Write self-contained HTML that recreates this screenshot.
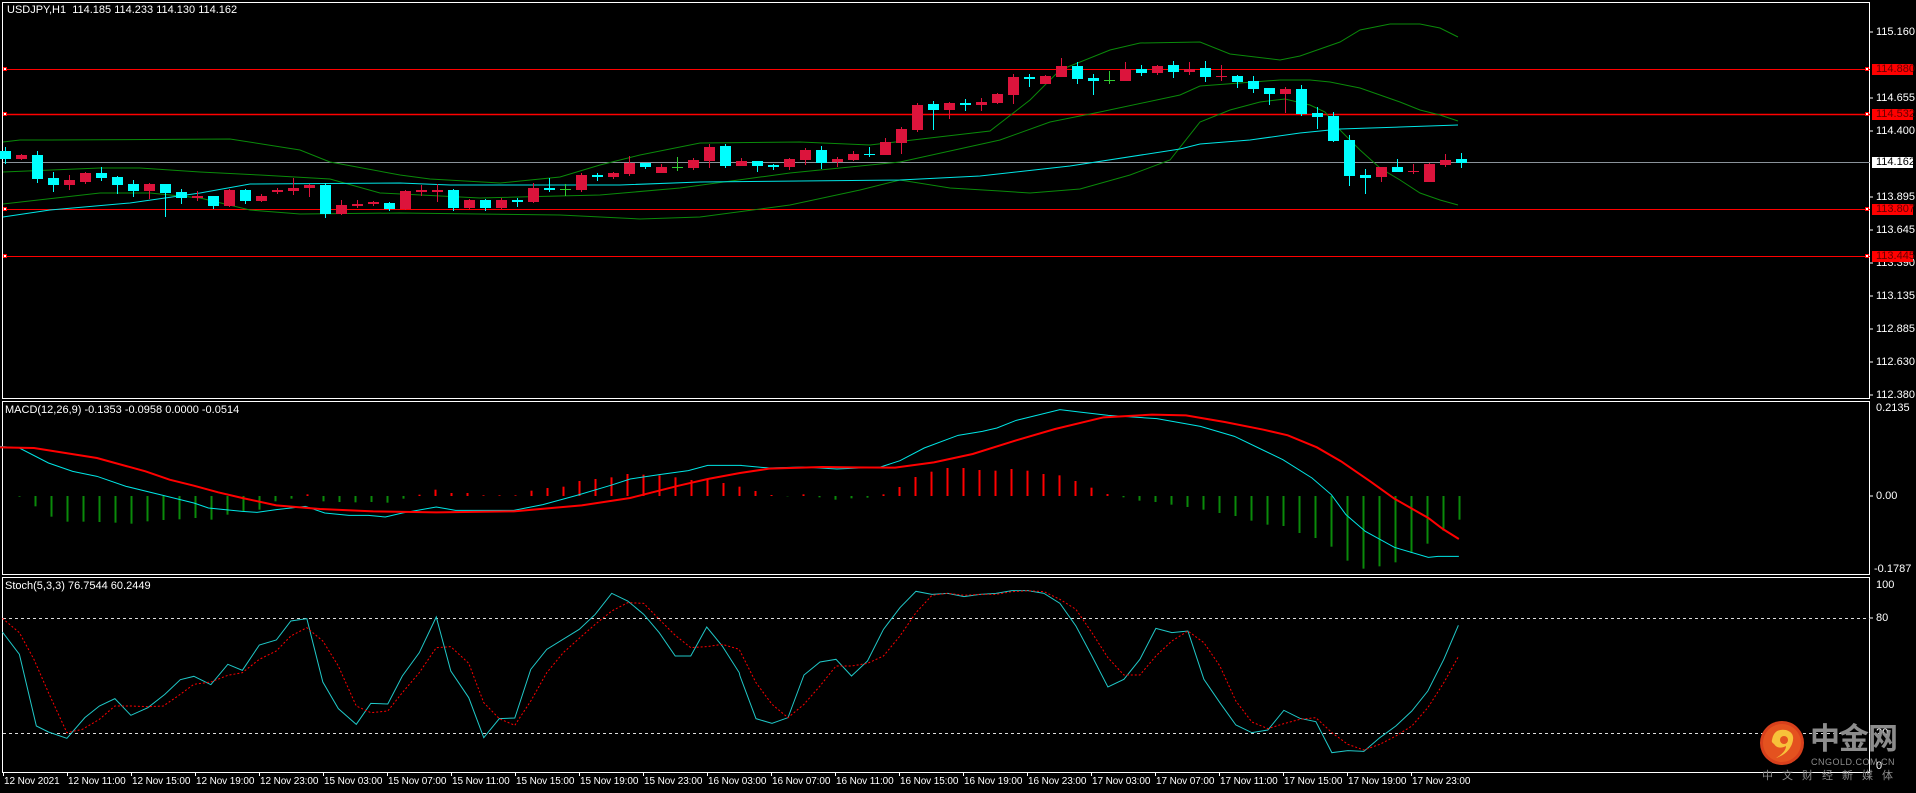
<!DOCTYPE html>
<html><head><meta charset="utf-8">
<style>
html,body{margin:0;padding:0;background:#000;width:1916px;height:793px;overflow:hidden;font-family:"Liberation Sans",Tahoma,sans-serif;}
.t{position:absolute;color:#fff;font-size:11px;line-height:12px;white-space:nowrap;}
.ax{position:absolute;left:1876px;color:#fff;font-size:11px;line-height:12px;}
.box{position:absolute;left:1872px;width:41px;height:11px;background:#f00;color:#600;font-size:11px;line-height:11px;padding-left:4px;box-sizing:border-box;}
.tl{position:absolute;top:776px;color:#fff;font-size:10px;line-height:12px;white-space:nowrap;letter-spacing:-0.1px;}
</style></head><body>
<svg id="s" width="1916" height="793" style="position:absolute;left:0;top:0" xmlns="http://www.w3.org/2000/svg">
<g fill="none" stroke="#fff" stroke-width="1">
<rect x="2.5" y="2.5" width="1867" height="396"/>
<rect x="2.5" y="401.5" width="1867" height="173"/>
<rect x="2.5" y="577.5" width="1867" height="195"/>
</g>
<g stroke="#f00">
<line x1="3" y1="69.5" x2="1870" y2="69.5"/>
<line x1="3" y1="114.5" x2="1870" y2="114.5" stroke-width="1.5"/>
<line x1="3" y1="209.5" x2="1870" y2="209.5"/>
<line x1="3" y1="256.5" x2="1870" y2="256.5"/>
</g>
<line x1="3" y1="162.5" x2="1870" y2="162.5" stroke="#8a929a"/>
<g fill="#fff" stroke="#f00">
<rect x="3.5" y="67.5" width="3" height="3"/><rect x="3.5" y="112.5" width="3" height="3"/><rect x="3.5" y="207.5" width="3" height="3"/><rect x="3.5" y="254.5" width="3" height="3"/>
<rect x="1865.5" y="67.5" width="3" height="3"/><rect x="1865.5" y="112.5" width="3" height="3"/><rect x="1865.5" y="207.5" width="3" height="3"/><rect x="1865.5" y="254.5" width="3" height="3"/>
</g>
<g stroke="#ddd" stroke-dasharray="3,3">
<line x1="3" y1="618.5" x2="1870" y2="618.5"/>
<line x1="3" y1="733.5" x2="1870" y2="733.5"/>
</g>
<g id="g"></g>
<g stroke="#fff">
<line x1="1870" y1="32" x2="1873" y2="32"/><line x1="1870" y1="98" x2="1873" y2="98"/><line x1="1870" y1="131" x2="1873" y2="131"/><line x1="1870" y1="197" x2="1873" y2="197"/><line x1="1870" y1="230" x2="1873" y2="230"/><line x1="1870" y1="263" x2="1873" y2="263"/><line x1="1870" y1="296" x2="1873" y2="296"/><line x1="1870" y1="329" x2="1873" y2="329"/><line x1="1870" y1="362" x2="1873" y2="362"/><line x1="1870" y1="395" x2="1873" y2="395"/>
<line x1="1870" y1="496" x2="1873" y2="496"/><line x1="1870" y1="618" x2="1873" y2="618"/>
</g>
<g id="ticks" stroke="#fff"></g>
<circle cx="1782" cy="743" r="22" fill="#d8401c"/>
<circle cx="1782" cy="743" r="19" fill="#e4521f"/>
<path d="M1772 740 q2 -12 14 -10 q10 3 6 14 q-4 10 -16 14 q10 -6 10 -12 q-8 4 -12 -2 q-3 -2 -2 -4z" fill="#f7c13a"/>
<circle cx="1784" cy="740" r="4" fill="#e4521f"/>
</svg>

<div class="t" style="left:7px;top:4px">USDJPY,H1&nbsp;&nbsp;114.185 114.233 114.130 114.162</div>
<div class="t" style="left:5px;top:404px">MACD(12,26,9) -0.1353 -0.0958 0.0000 -0.0514</div>
<div class="t" style="left:5px;top:580px">Stoch(5,3,3) 76.7544 60.2449</div>

<div class="ax" style="top:26px">115.160</div>
<div class="ax" style="top:92px">114.655</div>
<div class="ax" style="top:125px">114.400</div>
<div class="ax" style="top:191px">113.895</div>
<div class="ax" style="top:224px">113.645</div>
<div class="ax" style="top:257px">113.390</div>
<div class="ax" style="top:290px">113.135</div>
<div class="ax" style="top:323px">112.885</div>
<div class="ax" style="top:356px">112.630</div>
<div class="ax" style="top:389px">112.380</div>
<div class="box" style="top:64px">114.880</div>
<div class="box" style="top:109px">114.532</div>
<div class="box" style="top:157px;background:#fff;color:#000">114.162</div>
<div class="box" style="top:204px">113.807</div>
<div class="box" style="top:251px">113.445</div>
<div class="ax" style="top:402px">0.2135</div>
<div class="ax" style="top:490px">0.00</div>
<div class="ax" style="top:563px;left:1874px">-0.1787</div>
<div class="ax" style="top:579px">100</div>
<div class="ax" style="top:612px">80</div>
<div class="ax" style="top:727px">20</div>
<div class="ax" style="top:760px">0</div>

<div class="tl" style="left:4px">12 Nov 2021</div>
<div class="tl" style="left:68px">12 Nov 11:00</div>
<div class="tl" style="left:132px">12 Nov 15:00</div>
<div class="tl" style="left:196px">12 Nov 19:00</div>
<div class="tl" style="left:260px">12 Nov 23:00</div>
<div class="tl" style="left:324px">15 Nov 03:00</div>
<div class="tl" style="left:388px">15 Nov 07:00</div>
<div class="tl" style="left:452px">15 Nov 11:00</div>
<div class="tl" style="left:516px">15 Nov 15:00</div>
<div class="tl" style="left:580px">15 Nov 19:00</div>
<div class="tl" style="left:644px">15 Nov 23:00</div>
<div class="tl" style="left:708px">16 Nov 03:00</div>
<div class="tl" style="left:772px">16 Nov 07:00</div>
<div class="tl" style="left:836px">16 Nov 11:00</div>
<div class="tl" style="left:900px">16 Nov 15:00</div>
<div class="tl" style="left:964px">16 Nov 19:00</div>
<div class="tl" style="left:1028px">16 Nov 23:00</div>
<div class="tl" style="left:1092px">17 Nov 03:00</div>
<div class="tl" style="left:1156px">17 Nov 07:00</div>
<div class="tl" style="left:1220px">17 Nov 11:00</div>
<div class="tl" style="left:1284px">17 Nov 15:00</div>
<div class="tl" style="left:1348px">17 Nov 19:00</div>
<div class="tl" style="left:1412px">17 Nov 23:00</div>

<div style="position:absolute;left:1810px;top:718px;font-family:'Noto Sans CJK SC',sans-serif;font-weight:bold;font-size:30px;line-height:36px;color:#8c8c8c;letter-spacing:-1px">中金网</div>
<div style="position:absolute;left:1811px;top:757px;font-size:9px;line-height:10px;color:#8c8c8c;letter-spacing:0.5px">CNGOLD.COM.CN</div>
<div style="position:absolute;left:1762px;top:768px;font-family:'Noto Sans CJK SC',sans-serif;font-size:11px;line-height:14px;color:#8c8c8c;letter-spacing:9px">中文财经新媒体</div>

<script>
(function(){
var NS="http://www.w3.org/2000/svg",g=document.getElementById("g");
function el(n,a){var e=document.createElementNS(NS,n);for(var k in a)e.setAttribute(k,a[k]);g.appendChild(e);return e;}
function pl(pts,c,w,d){el("polyline",{points:pts.map(function(p){return p[0]+","+p[1]}).join(" "),fill:"none",stroke:c,"stroke-width":w||1,"stroke-dasharray":d||"none"});}
pl([[3,142],[20,140],[50,140],[230,139],[300,150],[330,162],[400,175],[430,179],[500,183],[560,177],[600,165],[640,155],[700,143],[800,142],[870,145],[990,131],[1030,100],[1060,70],[1110,50],[1140,43],[1200,42],[1230,54],[1280,60],[1300,56],[1340,42],[1360,30],[1390,24],[1420,24],[1440,28],[1458,37]],"#0a8a0a");
pl([[3,172],[100,168],[140,168],[200,172],[260,175],[330,179],[380,193],[480,198],[600,195],[680,188],[790,173],[900,162],[1000,140],[1050,122],[1100,112],[1180,95],[1200,86],[1240,83],[1280,80],[1310,80],[1330,82],[1360,88],[1380,95],[1400,102],[1420,110],[1440,115],[1458,121]],"#0a8a0a");
pl([[3,204],[100,193],[150,193],[200,198],[250,210],[300,214],[400,213],[560,215],[640,219],[700,217],[790,205],[860,190],[900,180],[950,188],[1000,191],[1030,193],[1080,189],[1130,175],[1170,160],[1200,122],[1230,110],[1260,102],[1285,99],[1310,105],[1325,112],[1340,130],[1360,150],[1380,168],[1400,180],[1420,193],[1440,200],[1458,205]],"#0a8a0a");
pl([[3,217],[50,210],[130,203],[200,193],[250,184],[400,183],[450,185],[620,185],[700,182],[800,181],[900,180],[980,176],[1070,166],[1180,149],[1200,144],[1250,140],[1300,133],[1340,129],[1400,127],[1458,125]],"#00e5e5");
var C=[[151,159,147,164,'c'],[155,159,154,160,'r'],[155,179,151,183,'c'],[178,185,172,192,'c'],[180,185,175,190,'r'],[173,182,172,184,'r'],[173,178,167,181,'c'],[177,185,176,194,'c'],[184,191,180,197,'c'],[184,191,183,199,'r'],[184,193,184,217,'c'],[192,198,189,204,'c'],[196,198,191,201,'r'],[196,206,196,209,'c'],[190,206,189,207,'r'],[190,201,189,204,'c'],[196,201,194,202,'r'],[190,192,188,194,'r'],[188,191,178,195,'r'],[185,188,184,197,'r'],[185,214,183,218,'c'],[205,214,200,215,'r'],[204,206,200,208,'r'],[202,204,201,206,'r'],[203,209,202,211,'c'],[191,209,190,210,'r'],[190,192,185,196,'r'],[190,192,184,202,'r'],[190,208,189,211,'c'],[200,208,199,209,'r'],[200,208,199,211,'c'],[200,208,198,209,'r'],[200,202,198,207,'c'],[188,202,183,203,'r'],[188,190,178,192,'c'],[189,190,184,196,'g'],[175,190,173,192,'r'],[175,177,173,181,'c'],[173,177,172,179,'r'],[163,174,156,176,'r'],[163,167,163,169,'c'],[167,173,164,173,'r'],[167,168,157,171,'g'],[160,168,158,170,'r'],[147,161,144,168,'r'],[146,166,144,168,'c'],[161,166,158,166,'r'],[161,166,161,172,'c'],[165,167,164,170,'c'],[159,167,158,170,'r'],[150,160,148,165,'r'],[150,163,146,169,'c'],[159,162,157,167,'r'],[154,160,151,161,'r'],[154,155,147,157,'c'],[142,155,138,155,'r'],[129,143,127,154,'r'],[105,130,103,132,'r'],[104,110,101,130,'c'],[103,110,102,119,'r'],[103,105,99,111,'c'],[102,105,98,111,'r'],[94,103,93,104,'r'],[77,95,74,104,'r'],[77,79,74,87,'c'],[76,84,75,84,'r'],[66,77,58,77,'r'],[66,79,62,84,'c'],[78,81,74,95,'c'],[80,81,71,84,'g'],[69,81,62,81,'r'],[69,73,65,76,'c'],[66,73,65,75,'r'],[65,72,61,78,'c'],[69,72,62,75,'r'],[68,77,61,82,'c'],[76,77,65,81,'r'],[76,82,75,88,'c'],[81,89,76,93,'c'],[88,94,88,105,'c'],[89,94,87,113,'r'],[89,114,85,116,'c'],[113,117,107,129,'c'],[116,141,112,142,'c'],[140,176,135,186,'c'],[175,178,169,194,'c'],[167,177,167,182,'r'],[167,172,159,172,'c'],[171,172,164,174,'r'],[164,182,163,182,'r'],[160,165,154,167,'r'],[159,163,153,168,'c']];
var col={c:'#00ffff',r:'#dc143c',g:'#32cd32'};
C.forEach(function(c,k){var x=5+16*k,cl=col[c[4]];
el("line",{x1:x+0.5,y1:c[2],x2:x+0.5,y2:c[3],stroke:cl});
el("rect",{x:x-5,y:c[0],width:11,height:Math.max(1,c[1]-c[0]),fill:cl});});
var h1=[296,325,356,371,371,372,374,377,370,366,364,360,365,350,341,335,310,302,289,310,312,313,312,314,302,290,275,285,285,292,292,292,278,270,266,249,243,238,228,230,232,238,246,244,255,266];
var h2=[279,291,295,289,298,305,301,299,289,267,237,221,210,210,216,218,213,218,228,232,249,269,288,298,308,312,320,327,335,345,354,368,380,384,405,420,446,488,512,505,493,465,437,398,365];
var hist=h1.concat(h2);
hist.forEach(function(zy,i){var x=19+16*i,y=398+zy/3;el("line",{x1:x+0.5,y1:496,x2:x+0.5,y2:y,stroke:y<496?'#f00':'#0a8a0a',"stroke-width":2});});
function cv(a,ox){return a.map(function(p){return[ox+p[0]/2.063,398+p[1]/3];});}
function cs(a,ox){return a.map(function(p){return[ox+p[0]/2.063,576+p[1]/3];});}
var mc1=cv([[0,145],[40,150],[100,195],[150,220],[200,235],[260,265],[330,290],[400,315],[430,330],[500,340],[530,343],[570,335],[630,325],[670,345],[720,352],[760,352],[795,357],[830,345],[900,327],[940,337],[1060,337],[1120,320],[1190,292],[1260,262],[1300,243],[1360,230],[1420,218],[1460,202],[1530,202]],0)
.concat(cv([[0,202],[60,210],[130,207],[200,213],[290,207],[330,188],[380,150],[450,112],[500,100],[530,90],[570,67],[660,35],[700,42],[760,52],[860,62],[950,85],[1020,115],[1070,150],[1120,185],[1180,240],[1220,290],[1250,350],[1290,400],[1350,448],[1420,478],[1440,475],[1483,475]],740));
var mr=cv([[0,148],[70,150],[200,180],[300,220],[350,245],[400,263],[450,283],[500,300],[570,322],[660,333],[770,340],[900,343],[1060,340],[1200,322],[1300,300],[1400,263],[1460,243]],0)
.concat(cv([[0,225],[60,212],[170,207],[230,208],[320,209],[400,193],[480,168],[570,127],[650,93],[750,58],[850,50],[920,52],[1000,72],[1080,95],[1130,112],[1190,148],[1240,190],[1300,250],[1350,302],[1420,360],[1450,393],[1483,423]],740));
pl(mc1,"#00e5e5",1);pl(mr,"#f00",2);
var sc=cs([[5,168],[40,235],[75,450],[100,468],[138,487],[175,425],[205,390],[237,368],[270,418],[305,395],[340,355],[372,311],[400,301],[435,326],[470,265],[500,283],[535,207],[570,192],[600,135],[633,128],[666,318],[698,398],[735,445],[765,382],[800,384],[830,300],[865,230],[900,123],[930,285],[967,365],[998,485],[1030,428],[1062,426],[1095,280],[1128,220],[1195,160],[1228,115],[1262,52],[1295,75],[1328,115],[1360,170],[1393,240],[1425,240],[1458,153],[1490,210],[1525,290]],0)
.concat(cs([[0,300],[33,428],[66,442],[99,425],[132,297],[165,258],[198,250],[230,300],[263,255],[296,160],[330,95],[363,46],[396,55],[429,52],[462,62],[495,55],[528,52],[561,44],[594,44],[627,52],[660,82],[693,150],[726,240],[759,333],[792,310],[825,250],[858,157],[891,170],[924,165],[957,310],[990,380],[1023,447],[1056,470],[1089,462],[1122,403],[1155,427],[1188,437],[1221,530],[1254,524],[1287,526],[1320,485],[1353,450],[1386,405],[1419,345],[1452,250],[1482,148]],740));
var sr=cs([[5,127],[40,170],[70,250],[100,350],[138,470],[170,460],[205,430],[237,390],[270,390],[305,392],[337,390],[372,355],[400,325],[435,318],[470,298],[500,290],[535,250],[570,225],[600,180],[633,155],[666,195],[698,270],[735,390],[765,410],[800,405],[830,350],[865,290],[900,215],[930,212],[967,262],[998,380],[1030,428],[1062,448],[1095,375],[1128,290],[1162,230],[1195,187],[1228,145],[1262,105],[1295,80],[1328,82],[1360,130],[1393,178],[1425,215],[1458,212],[1490,205],[1525,220]],0)
.concat(cs([[0,225],[33,320],[66,385],[99,425],[132,385],[165,330],[198,270],[230,270],[263,262],[296,240],[330,180],[363,110],[396,58],[429,52],[462,58],[495,55],[528,55],[561,47],[594,44],[627,47],[660,70],[693,100],[726,170],[759,245],[792,297],[825,297],[858,240],[891,195],[924,165],[957,200],[990,270],[1023,375],[1056,438],[1089,458],[1122,443],[1155,430],[1188,425],[1221,470],[1254,505],[1287,522],[1320,505],[1353,480],[1386,450],[1419,395],[1452,320],[1482,242]],740));
pl(sc,"#20c8c8",1);pl(sr,"#f00",1,"2,2");
var t=document.getElementById("ticks");
for(var i=0;i<23;i++){var x=3.5+64*i,l=document.createElementNS(NS,"line");l.setAttribute("x1",x);l.setAttribute("x2",x);l.setAttribute("y1",772);l.setAttribute("y2",776);t.appendChild(l);}
})();
</script>
</body></html>
